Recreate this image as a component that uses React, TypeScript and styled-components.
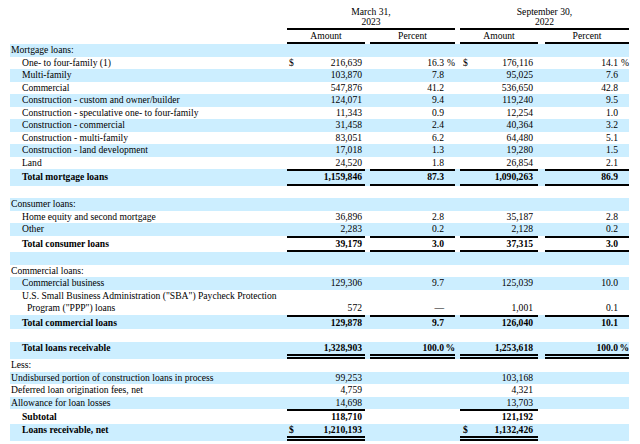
import styled, { createGlobalStyle, css } from "styled-components";

type Rule = "single" | "double";

interface ILine {
  label?: string;
  tone?: "flush" | "item" | "total";
  a1?: string;
  p1?: string;
  a2?: string;
  p2?: string;
  dollar?: boolean;
  pct?: boolean;
  top?: Rule;
  bottom?: Rule;
  amountsOnly?: boolean;
  hang?: string;
}

const lines: ILine[] = [
  { label: "Mortgage loans:", tone: "flush" },
  { label: "One- to four-family (1)", a1: "216,639", p1: "16.3", a2: "176,116", p2: "14.1", dollar: true, pct: true },
  { label: "Multi-family", a1: "103,870", p1: "7.8", a2: "95,025", p2: "7.6" },
  { label: "Commercial", a1: "547,876", p1: "41.2", a2: "536,650", p2: "42.8" },
  { label: "Construction - custom and owner/builder", a1: "124,071", p1: "9.4", a2: "119,240", p2: "9.5" },
  { label: "Construction - speculative one- to four-family", a1: "11,343", p1: "0.9", a2: "12,254", p2: "1.0" },
  { label: "Construction - commercial", a1: "31,458", p1: "2.4", a2: "40,364", p2: "3.2" },
  { label: "Construction - multi-family", a1: "83,051", p1: "6.2", a2: "64,480", p2: "5.1" },
  { label: "Construction - land development", a1: "17,018", p1: "1.3", a2: "19,280", p2: "1.5" },
  { label: "Land", a1: "24,520", p1: "1.8", a2: "26,854", p2: "2.1" },
  { label: "Total mortgage loans", tone: "total", a1: "1,159,846", p1: "87.3", a2: "1,090,263", p2: "86.9", top: "single", bottom: "single" },
  {},
  { label: "Consumer loans:", tone: "flush" },
  { label: "Home equity and second mortgage", a1: "36,896", p1: "2.8", a2: "35,187", p2: "2.8" },
  { label: "Other", a1: "2,283", p1: "0.2", a2: "2,128", p2: "0.2" },
  { label: "Total consumer loans", tone: "total", a1: "39,179", p1: "3.0", a2: "37,315", p2: "3.0", top: "single", bottom: "single" },
  {},
  { label: "Commercial loans:", tone: "flush" },
  { label: "Commercial business", a1: "129,306", p1: "9.7", a2: "125,039", p2: "10.0" },
  {
    label: 'U.S. Small Business Administration ("SBA") Paycheck Protection',
    hang: 'Program ("PPP") loans',
    a1: "572",
    p1: "—",
    a2: "1,001",
    p2: "0.1",
  },
  { label: "Total commercial loans", tone: "total", a1: "129,878", p1: "9.7", a2: "126,040", p2: "10.1", top: "single" },
  {},
  { label: "Total loans receivable", tone: "total", a1: "1,328,903", p1: "100.0", a2: "1,253,618", p2: "100.0", pct: true, bottom: "double" },
  { label: "Less:", tone: "flush" },
  { label: "Undisbursed portion of construction loans in process", tone: "flush", a1: "99,253", a2: "103,168" },
  { label: "Deferred loan origination fees, net", tone: "flush", a1: "4,759", a2: "4,321" },
  { label: "Allowance for loan losses", tone: "flush", a1: "14,698", a2: "13,703" },
  { label: "Subtotal", tone: "total", a1: "118,710", a2: "121,192", top: "single", amountsOnly: true },
  { label: "Loans receivable, net", tone: "total", a1: "1,210,193", a2: "1,132,426", dollar: true, bottom: "double", amountsOnly: true },
];

const GlobalStyle = createGlobalStyle`
  html, body {
    margin: 0;
    background: #fff;
  }
  body {
    font-family: "Liberation Serif", "Times New Roman", serif;
    font-size: 9.6px;
    color: #000;
  }
`;

const rule = (r: Rule | undefined, ink: boolean) => {
  const colour = ink ? "#000" : "transparent";
  if (r === "double") return `5px double ${colour}`;
  if (r === "single") return `2px solid ${colour}`;
  return "0";
};

const columns = css`
  display: grid;
  grid-template-columns: 277px 78px 90px 83px 91px;

  & > :nth-child(3),
  & > :nth-child(4) {
    margin-left: 5px;
  }
  & > :nth-child(5) {
    margin-left: 7px;
  }
`;

const Sheet = styled.div`
  margin-left: 10px;
  width: 619px;
`;

const HeadRow = styled.div`
  ${columns}
`;

const Period = styled.div<{ $span: string; $inset?: number }>`
  grid-column: ${(p) => p.$span};
  margin-left: ${(p) => p.$inset ?? 0}px !important;
  text-align: center;
  line-height: 10px;
  padding: 7px 0 1px;
  border-bottom: 2px solid #000;
`;

const ColHead = styled.div`
  text-align: center;
  line-height: 12px;
  border-bottom: 2px solid #000;
`;

const Row = styled.div<{ $shade: boolean; $bold?: boolean }>`
  ${columns}
  background: ${(p) => (p.$shade ? "#cceeff" : "#fff")};
  font-weight: ${(p) => (p.$bold ? 700 : 400)};
  line-height: 12.5px;
  min-height: 12.5px;

  & > :nth-child(2) {
    padding: 0 3px 0 2px;
  }
  & > :nth-child(4) {
    padding: 0 5px 0 3px;
  }
`;

interface ICellProps {
  $top?: Rule;
  $bottom?: Rule;
  $ink?: boolean;
}

const Cell = styled.div<ICellProps>`
  border-top: ${(p) => rule(p.$top, !!p.$ink)};
  border-bottom: ${(p) => rule(p.$bottom, !!p.$ink)};
  white-space: nowrap;
`;

const Label = styled(Cell)<{ $tone?: ILine["tone"] }>`
  padding-left: ${(p) => (p.$tone === "flush" ? 1 : 12)}px;
`;

const Hang = styled.span`
  display: block;
  padding-left: 5px;
`;

const Amount = styled(Cell)`
  display: flex;
  align-items: flex-end;
`;

const Sign = styled.span`
  margin-right: auto;
`;

const Value = styled.span`
  margin-left: auto;
`;

const Pct = styled(Cell)`
  display: flex;
  align-items: flex-end;
  justify-content: flex-end;
`;

const Suffix = styled.span`
  width: 11px;
  text-align: right;
`;

export default function App() {
  return (
    <>
      <GlobalStyle />
      <Sheet>
        <HeadRow>
          <div />
          <Period $span="2 / 4">
            March 31,
            <br />
            2023
          </Period>
          <Period $span="4 / 6" $inset={5}>
            September 30,
            <br />
            2022
          </Period>
        </HeadRow>
        <HeadRow>
          <div />
          <ColHead>Amount</ColHead>
          <ColHead>Percent</ColHead>
          <ColHead>Amount</ColHead>
          <ColHead>Percent</ColHead>
        </HeadRow>

        {lines.map((l, i) => {
          const edges = { $top: l.top, $bottom: l.bottom };
          const pctInk = !l.amountsOnly;
          return (
            <Row key={i} $shade={i % 2 === 0} $bold={l.tone === "total"}>
              <Label {...edges} $tone={l.tone}>
                {l.label}
                {l.hang && <Hang>{l.hang}</Hang>}
              </Label>
              <Amount {...edges} $ink>
                {l.dollar && <Sign>$</Sign>}
                <Value>{l.a1}</Value>
              </Amount>
              <Pct {...edges} $ink={pctInk}>
                <span>{l.p1}</span>
                <Suffix>{l.pct ? "%" : ""}</Suffix>
              </Pct>
              <Amount {...edges} $ink>
                {l.dollar && <Sign>$</Sign>}
                <Value>{l.a2}</Value>
              </Amount>
              <Pct {...edges} $ink={pctInk}>
                <span>{l.p2}</span>
                <Suffix>{l.pct ? "%" : ""}</Suffix>
              </Pct>
            </Row>
          );
        })}
      </Sheet>
    </>
  );
}
